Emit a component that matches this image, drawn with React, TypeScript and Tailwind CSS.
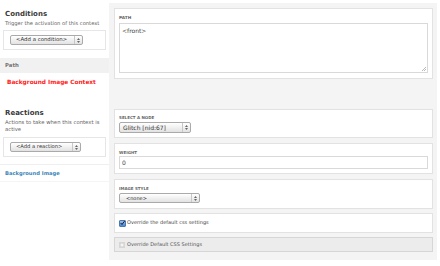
import React from "react";

function MacSelect({
  text,
  className,
  textClass,
}: {
  text: string;
  className: string;
  textClass: string;
}) {
  return (
    <div
      className={`flex items-stretch rounded-[2px] border border-[#aaaaaa] bg-linear-to-b from-white to-[#e2e2e2] ${className}`}
    >
      <div className={`flex-1 flex items-center whitespace-nowrap leading-none text-[#333] ${textClass}`}>
        {text}
      </div>
      <div className="w-[8px] border-l border-[#c8c8c8] flex flex-col items-center justify-center gap-[1px]">
        <svg width="3" height="2" viewBox="0 0 3 2">
          <path d="M0 2 L1.5 0 L3 2Z" fill="#666" />
        </svg>
        <svg width="3" height="2" viewBox="0 0 3 2">
          <path d="M0 0 L1.5 2 L3 0Z" fill="#666" />
        </svg>
      </div>
    </div>
  );
}

export default function App() {
  return (
    <div className="w-[440px] h-[266px] bg-white flex overflow-hidden font-['DejaVu_Sans',sans-serif]">
      {/* Left column */}
      <div className="w-[109px] shrink-0 flex flex-col">
        <div className="pt-[10px] px-[5px]">
          <div className="text-[7px] font-bold text-[#3a3a3a] leading-[8px]">Conditions</div>
          <div className="text-[5.2px] text-[#666] leading-[6px] mt-[2px] whitespace-nowrap">
            Trigger the activation of this context
          </div>
        </div>
        <div className="mx-[3px] mt-[4px] h-[20px] border border-[#e6e6e6] pl-[6px] pt-[4px]">
          <MacSelect text="<Add a condition>" className="w-[73px] h-[10px]" textClass="text-[5.4px] pl-[5px]" />
        </div>
        <div className="mt-[8px] h-[15px] bg-[#f1f1f1] flex items-center px-[5px]">
          <span className="text-[5.4px] font-bold text-[#777]">Path</span>
        </div>
        <div className="mt-[6px] px-[7px] text-[5.8px] leading-[6px] font-bold text-[#ff2020] whitespace-nowrap">
          Background Image Context
        </div>
        <div className="pt-[24px] px-[5px]">
          <div className="text-[7px] font-bold text-[#3a3a3a] leading-[8px]">Reactions</div>
          <div className="text-[5.3px] text-[#666] leading-[7px] mt-[2px]">
            Actions to take when this context is active
          </div>
        </div>
        <div className="mx-[3px] mt-[4px] h-[20px] border border-[#e6e6e6] pl-[6px] pt-[4px]">
          <MacSelect text="<Add a reaction>" className="w-[71px] h-[10px]" textClass="text-[5.2px] pl-[5px]" />
        </div>
        <div className="mt-[7px] border-t border-[#efefef]" />
        <div className="mt-[5px] px-[5px] text-[5.2px] leading-[6px] font-bold text-[#3a86b8] whitespace-nowrap">
          Background Image
        </div>
        <div className="mt-[5px] border-t border-[#f5f5f5]" />
      </div>

      {/* Right panel */}
      <div className="mt-[3px] h-[257px] w-[328px] shrink-0 bg-[#f4f4f4] pl-[5px] pr-[4px] pt-[5px] flex flex-col">
        {/* Path */}
        <div className="h-[71px] bg-white border border-[#e2e2e2] px-[4px] pt-[6px] flex flex-col">
          <div className="text-[4.3px] font-bold text-[#666] leading-[5px]">PATH</div>
          <div className="relative mt-[3px] h-[50px] border border-[#d9d9d9] px-[2px] pt-[3px] text-[6px] leading-[7px] text-[#444]">
            &lt;front&gt;
            <svg className="absolute right-[1px] bottom-[1px]" width="5" height="5" viewBox="0 0 5 5">
              <path d="M1 5 L5 1 M3 5 L5 3" stroke="#aaa" strokeWidth="0.8" />
            </svg>
          </div>
        </div>

        {/* Select a node */}
        <div className="mt-[30px] h-[29px] bg-white border border-[#e2e2e2] px-[4px] pt-[5px] flex flex-col">
          <div className="text-[4px] font-bold text-[#666] leading-[5px] whitespace-nowrap">SELECT A NODE</div>
          <MacSelect text="Glitch [nid:67]" className="mt-[2px] w-[72px] h-[11px]" textClass="text-[6px] pl-[3px]" />
        </div>

        {/* Weight */}
        <div className="mt-[5px] h-[31px] bg-white border border-[#e2e2e2] px-[4px] pt-[6px] flex flex-col">
          <div className="text-[4px] font-bold text-[#666] leading-[5px]">WEIGHT</div>
          <div className="mt-[1px] h-[13px] border border-[#d9d9d9] flex items-center px-[2px] text-[6px] text-[#444]">
            0
          </div>
        </div>

        {/* Image style */}
        <div className="mt-[5px] h-[30px] bg-white border border-[#e2e2e2] px-[4px] pt-[6px] flex flex-col">
          <div className="text-[4px] font-bold text-[#666] leading-[5px] whitespace-nowrap">IMAGE STYLE</div>
          <MacSelect text="<none>" className="mt-[2px] w-[81px] h-[10px]" textClass="text-[5px] pl-[6px]" />
        </div>

        {/* Checkbox */}
        <div className="mt-[4px] h-[20px] bg-white border border-[#e2e2e2] px-[4px] flex items-center gap-[1px]">
          <div className="w-[7px] h-[7px] rounded-[1px] border border-[#4a78b0] bg-linear-to-b from-[#9cc0ec] to-[#4a84d2] flex items-center justify-center">
            <svg width="6" height="6" viewBox="0 0 6 6">
              <path d="M0.8 3 L2.4 4.8 L5.6 0.6" stroke="#1a1a1a" strokeWidth="1.2" fill="none" />
            </svg>
          </div>
          <span className="text-[5px] text-[#444] whitespace-nowrap">Override the default css settings</span>
        </div>

        {/* Collapsible */}
        <div className="mt-[4px] h-[15px] bg-[#ececec] border border-[#d6d6d6] px-[4px] flex items-center gap-[2px]">
          <div className="w-[6px] h-[6px] bg-[#d6d6d6] flex items-center justify-center">
            <svg width="4" height="4" viewBox="0 0 4 4">
              <path d="M2 0.5 V3.5 M0.5 2 H3.5" stroke="#fff" strokeWidth="1" />
            </svg>
          </div>
          <span className="text-[5px] text-[#555] whitespace-nowrap">Override Default CSS Settings</span>
        </div>
      </div>
    </div>
  );
}
